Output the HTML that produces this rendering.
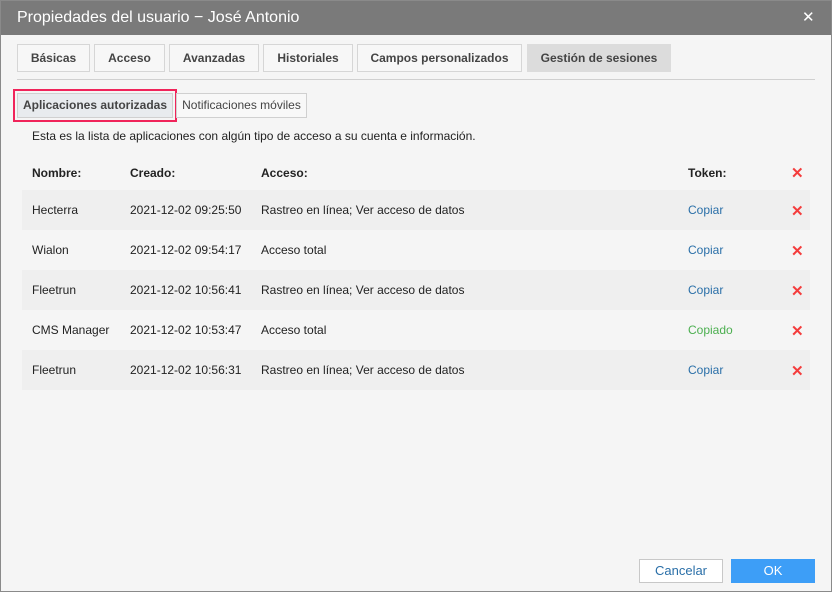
<!DOCTYPE html>
<html><head><meta charset="utf-8"><style>
*{box-sizing:border-box;margin:0;padding:0}
body{width:832px;height:592px;overflow:hidden;font-family:"Liberation Sans",Arial,sans-serif;background:#f5f5f5;position:relative;color:#222}
.frame{position:absolute;left:0;top:0;width:832px;height:592px;border:1px solid #8a8a8a;z-index:5}
.title{position:absolute;left:0;top:0;width:832px;height:35px;background:#7a7a7a;color:#fff;font-size:16px;line-height:35px;padding-left:17px}
.close{position:absolute;left:802px;top:0;color:#fff;font-size:15px}
.tab{position:absolute;top:44px;height:28px;border:1px solid #d6d6d6;background:#f7f7f7;font-size:12px;font-weight:bold;color:#444;text-align:center;line-height:26px}
.hr{position:absolute;left:17px;top:79px;width:798px;height:1px;background:#d0d0d0}
.st{position:absolute;top:93px;height:25px;border:1px solid #d0d0d0;font-size:12px;line-height:23px;text-align:center;color:#444}
.txt{position:absolute;font-size:12px}
.row{position:absolute;left:22px;width:788px;height:40px}
.x{position:absolute;left:791px;color:#f43c3c;font-size:15px;font-weight:bold}
.btn{position:absolute;top:559px;height:24px;width:84px;font-size:13px;text-align:center;line-height:22px}
</style></head><body>
<div class="frame"></div>
<div class="title">Propiedades del usuario − José Antonio<span class="close">✕</span></div>
<div class="tab" style="left:17px;width:73px">Básicas</div>
<div class="tab" style="left:94px;width:71px">Acceso</div>
<div class="tab" style="left:169px;width:90px">Avanzadas</div>
<div class="tab" style="left:263px;width:90px">Historiales</div>
<div class="tab" style="left:357px;width:165px">Campos personalizados</div>
<div class="tab" style="left:527px;width:144px;background:#dcdcdc;border-color:#dcdcdc">Gestión de sesiones</div>
<div class="hr"></div>
<div style="position:absolute;left:13px;top:89px;width:164px;height:33px;border:2px solid #f0245a"></div>
<div class="st" style="left:17px;width:156px;background:#e8ebee;font-weight:bold">Aplicaciones autorizadas</div>
<div class="st" style="left:176px;width:131px;background:#f8f8f8">Notificaciones móviles</div>
<div class="txt" style="left:32px;top:129px">Esta es la lista de aplicaciones con algún tipo de acceso a su cuenta e información.</div>
<div class="row" style="top:190px;background:#efefef"></div>
<div class="row" style="top:270px;background:#efefef"></div>
<div class="row" style="top:350px;background:#efefef"></div>
<div class="txt" style="left:32px;top:166px;font-weight:bold">Nombre:</div>
<div class="txt" style="left:130px;top:166px;font-weight:bold">Creado:</div>
<div class="txt" style="left:261px;top:166px;font-weight:bold">Acceso:</div>
<div class="txt" style="left:688px;top:166px;font-weight:bold">Token:</div>
<div class="x" style="top:164px">✕</div>

<div class="txt" style="left:32px;top:203px">Hecterra</div><div class="txt" style="left:130px;top:203px">2021-12-02 09:25:50</div><div class="txt" style="left:261px;top:203px">Rastreo en línea; Ver acceso de datos</div><div class="txt" style="left:688px;top:203px;color:#2a6fa8">Copiar</div><div class="x" style="top:202px">✕</div>
<div class="txt" style="left:32px;top:243px">Wialon</div><div class="txt" style="left:130px;top:243px">2021-12-02 09:54:17</div><div class="txt" style="left:261px;top:243px">Acceso total</div><div class="txt" style="left:688px;top:243px;color:#2a6fa8">Copiar</div><div class="x" style="top:242px">✕</div>
<div class="txt" style="left:32px;top:283px">Fleetrun</div><div class="txt" style="left:130px;top:283px">2021-12-02 10:56:41</div><div class="txt" style="left:261px;top:283px">Rastreo en línea; Ver acceso de datos</div><div class="txt" style="left:688px;top:283px;color:#2a6fa8">Copiar</div><div class="x" style="top:282px">✕</div>
<div class="txt" style="left:32px;top:323px">CMS Manager</div><div class="txt" style="left:130px;top:323px">2021-12-02 10:53:47</div><div class="txt" style="left:261px;top:323px">Acceso total</div><div class="txt" style="left:688px;top:323px;color:#4caf50">Copiado</div><div class="x" style="top:322px">✕</div>
<div class="txt" style="left:32px;top:363px">Fleetrun</div><div class="txt" style="left:130px;top:363px">2021-12-02 10:56:31</div><div class="txt" style="left:261px;top:363px">Rastreo en línea; Ver acceso de datos</div><div class="txt" style="left:688px;top:363px;color:#2a6fa8">Copiar</div><div class="x" style="top:362px">✕</div>

<div class="btn" style="left:639px;background:#fff;border:1px solid #c8c8c8;color:#2a6fa8">Cancelar</div>
<div class="btn" style="left:731px;background:#3d9ef7;border:1px solid #3d9ef7;color:#fff">OK</div>
</body></html>
